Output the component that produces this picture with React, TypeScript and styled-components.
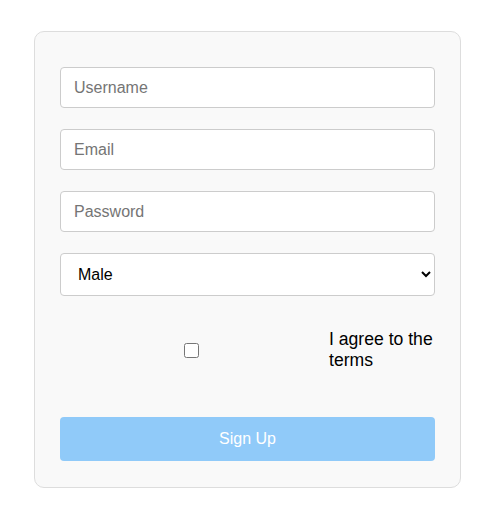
import styled, { createGlobalStyle } from "styled-components";

const GlobalStyle = createGlobalStyle`
  body {
    margin: 0;
    background: #ffffff;
    font-family: "Liberation Sans", Arial, sans-serif;
  }
`;

const Page = styled.div`
  padding: 31px 0 26px 34px;
`;

const Card = styled.form`
  width: 427px;
  box-sizing: border-box;
  padding: 35px 25px 26px;
  background: #f9f9f9;
  border: 1px solid #dddddd;
  border-radius: 10px;
  display: flex;
  flex-direction: column;
`;

const Input = styled.input`
  box-sizing: border-box;
  width: 100%;
  height: 41px;
  padding: 0 13px;
  margin-bottom: 21px;
  border: 1px solid #cccccc;
  border-radius: 4px;
  background: #ffffff;
  font-family: "Liberation Sans", Arial, sans-serif;
  font-size: 16px;
  color: #000;
  outline: none;
  &::placeholder {
    color: #757575;
  }
`;

const Select = styled.select`
  box-sizing: border-box;
  width: 100%;
  height: 43px;
  padding: 0 13px;
  border: 1px solid #cccccc;
  border-radius: 4px;
  background: #ffffff;
  font-family: "Liberation Sans", Arial, sans-serif;
  font-size: 16px;
  color: #000;
`;

const Agree = styled.label`
  display: flex;
  align-items: center;
  margin: 33px 0 46px;
  font-size: 17.6px;
  color: #000;
`;

const CheckCell = styled.span`
  width: 262px;
  display: flex;
  justify-content: center;
  flex-shrink: 0;
`;

const Check = styled.input`
  margin: 0;
  width: 15px;
  height: 15px;
`;

const AgreeText = styled.span`
  margin-left: 7px;
  width: 106px;
  line-height: 21px;
`;

const Submit = styled.button`
  height: 44px;
  width: 100%;
  border: none;
  border-radius: 4px;
  background: #90caf9;
  color: #ffffff;
  font-family: "Liberation Sans", Arial, sans-serif;
  font-size: 16px;
  cursor: not-allowed;
`;

export default function App() {
  return (
    <>
      <GlobalStyle />
      <Page>
        <Card onSubmit={(e) => e.preventDefault()}>
          <Input type="text" placeholder="Username" />
          <Input type="email" placeholder="Email" />
          <Input type="password" placeholder="Password" />
          <Select defaultValue="male">
            <option value="male">Male</option>
            <option value="female">Female</option>
          </Select>
          <Agree>
            <CheckCell>
              <Check type="checkbox" />
            </CheckCell>
            <AgreeText>I agree to the terms</AgreeText>
          </Agree>
          <Submit type="submit" disabled>
            Sign Up
          </Submit>
        </Card>
      </Page>
    </>
  );
}
